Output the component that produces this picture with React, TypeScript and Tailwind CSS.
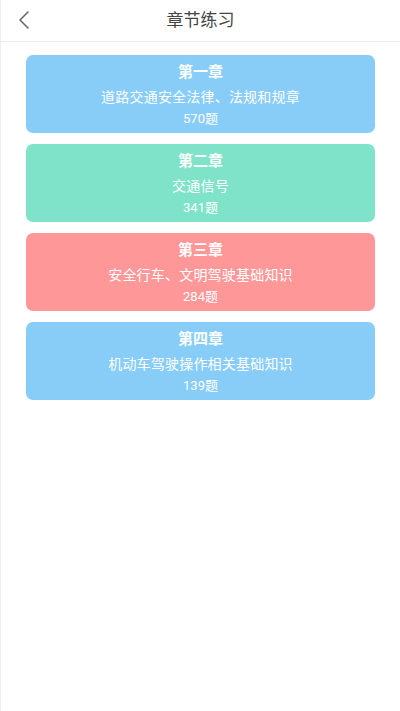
const chapters = [
  { name: '第一章', title: '道路交通安全法律、法规和规章', count: 570, color: 'bg-[#88ccf8]' },
  { name: '第二章', title: '交通信号', count: 341, color: 'bg-[#7ee3c8]' },
  { name: '第三章', title: '安全行车、文明驾驶基础知识', count: 284, color: 'bg-[#fe9798]' },
  { name: '第四章', title: '机动车驾驶操作相关基础知识', count: 139, color: 'bg-[#88ccf8]' },
]

export default function App() {
  return (
    <div
      className="w-[400px] h-[711px] bg-white border-l border-[#eeeeee] flex flex-col"
      style={{ fontFamily: 'Roboto, "Noto Sans CJK SC", sans-serif' }}
    >
      <div className="h-[42px] border-b border-[#ececec] flex items-center relative shrink-0">
        <button className="absolute left-[13px] top-[10px] w-5 h-5 flex items-center justify-center">
          <svg width="14" height="20" viewBox="0 0 14 20" fill="none">
            <path d="M11 2 L3 10 L11 18" stroke="#666" strokeWidth="1.6" strokeLinecap="round" strokeLinejoin="round" />
          </svg>
        </button>
        <div className="flex-1 text-center text-[17px] text-[#444] leading-none -mt-[1px]">章节练习</div>
      </div>

      <div className="flex flex-col gap-[11px] px-[25px] pt-[13px]">
        {chapters.map((c, i) => (
          <div
            key={i}
            className={`${c.color} h-[78px] rounded-[7px] flex flex-col items-center text-white pt-[7px]`}
          >
            <div className="text-[15px] font-bold leading-[20px]">{c.name}</div>
            <div className="text-[14px] leading-[20px] mt-[5px] tracking-[0.2px]">{c.title}</div>
            <div className="text-[13px] leading-[18px] mt-[3px]">{c.count}题</div>
          </div>
        ))}
      </div>
    </div>
  )
}
